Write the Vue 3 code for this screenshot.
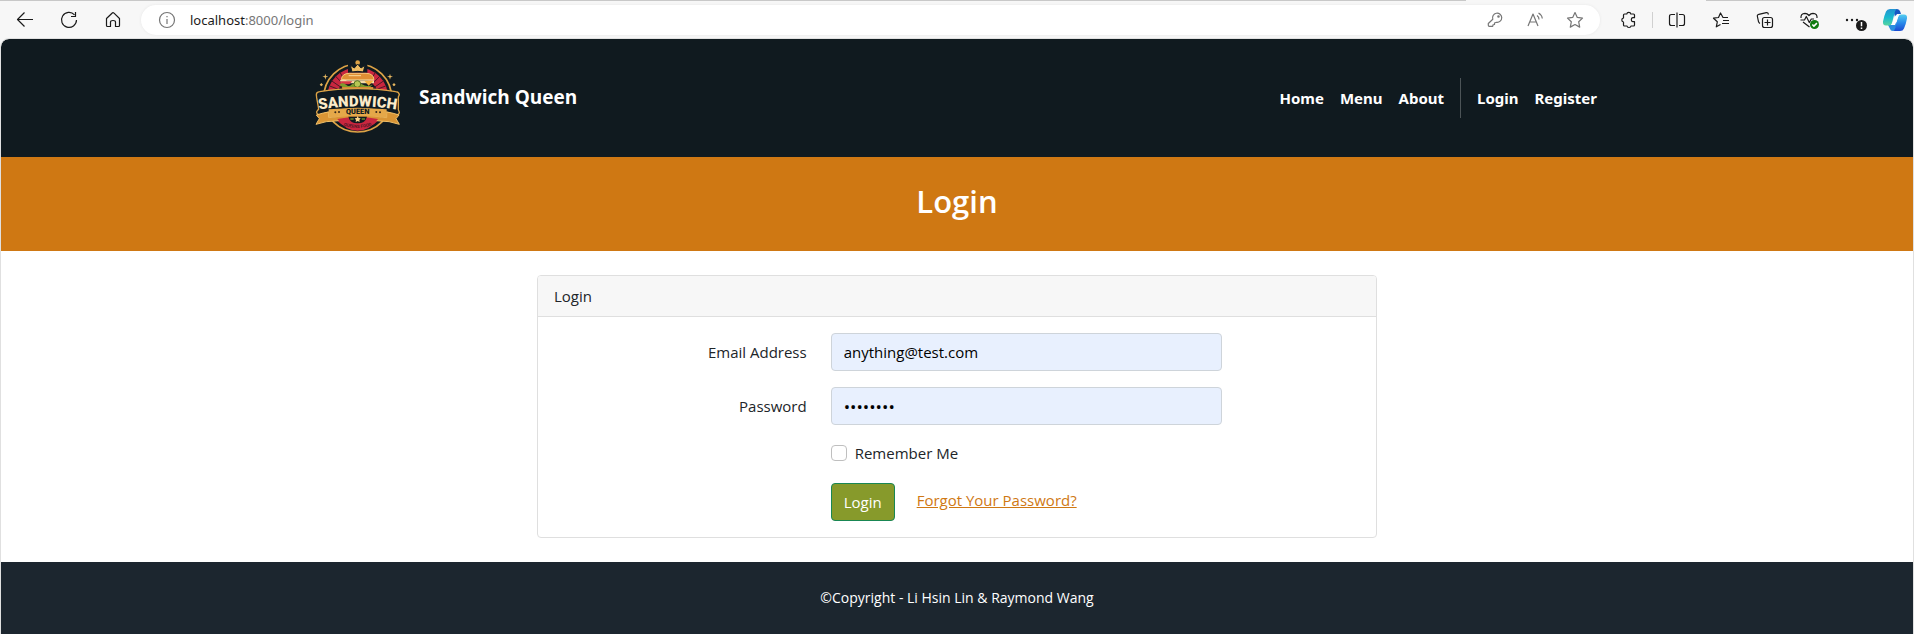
<script setup>
import { ref } from 'vue'

const email = ref('anything@test.com')
const password = ref('sandwich')
const remember = ref(false)

const mainLinks = ['Home', 'Menu', 'About']
const userLinks = ['Login', 'Register']
</script>

<template>
  <div class="window">
    <div class="tab-edge"><span class="edge"></span><span class="edge edge-end"></span></div>
    <div class="toolbar">
      <button class="tool" type="button" aria-label="Back">
        <svg viewBox="0 0 24 24"><path d="M4.5 11.5H20M11.5 4.5l-7 7 7 7" /></svg>
      </button>
      <button class="tool" type="button" aria-label="Refresh">
        <svg viewBox="0 0 24 24"><path d="M19.5 12A7.5 7.5 0 1 1 17.5 6.800M18.500 4v4.500H14" /></svg>
      </button>
      <button class="tool" type="button" aria-label="Home page">
        <svg viewBox="0 0 24 24"><path d="M5.500 10.500L11 5.200q1-1 2 0l5.500 5.300V17.500q0 1-1 1h-3V14q0-1.500-2.500-1.500T9.500 14v4.500h-3q-1 0-1-1z" /></svg>
      </button>

      <div class="address">
        <svg class="grey" viewBox="0 0 24 24"><circle cx="12" cy="12" r="7.500" /><path d="M12 11v5M12 8v1.200" /></svg>
        <span class="url"><span class="host">localhost</span>:8000/login</span>
        <button class="tool small" type="button" aria-label="Saved passwords">
          <svg class="grey" viewBox="0 0 24 24"><path d="M9.800 11.300A4.600 4.600 0 1 1 13.500 14.300L11.500 15v1.500l-1.500.3-.3 1.500H6.300q-1 0-1-1V15.500z" /><circle cx="15.500" cy="8.500" r=".7" /></svg>
        </button>
        <button class="tool small" type="button" aria-label="Read aloud">
          <svg class="grey" viewBox="0 0 24 24"><path d="M5 18L10 6l5 12M6.500 14h7M14 7.500a4.500 4.500 0 0 1 2 4M15.500 5a7.500 7.500 0 0 1 3.800 5.500" /></svg>
        </button>
        <button class="tool small" type="button" aria-label="Add to favorites">
          <svg class="grey" viewBox="0 0 24 24"><path d="M12 4.500l2.300 4.900 5.200.7-3.800 3.700 1 5.300L12 16.500 7.300 19.100l1-5.300-3.800-3.700 5.200-.7z" /></svg>
        </button>
      </div>

      <button class="tool" type="button" aria-label="Extensions">
        <svg viewBox="0 0 24 24"><path d="M7.500 6h2.300q.2-1.700 2-1.700t2 1.700h2.700q1 0 1 1v2.700h-1.700q-1.500.3-1.500 2t1.500 2h1.700v3.300q0 1-1 1H14q-.2 1.500-2 1.500t-2-1.500H7.500q-1 0-1-1V14q-1.700-.2-1.700-2t1.700-2V7q0-1 1-1z" /></svg>
      </button>
      <span class="tool-divider"></span>
      <button class="tool" type="button" aria-label="Split screen">
        <svg viewBox="0 0 24 24"><path d="M10 6.500H6.500q-2 0-2 2v7q0 2 2 2H10M14 6.500h3.500q2 0 2 2v7q0 2-2 2H14M12 4.500v15" /></svg>
      </button>
      <button class="tool" type="button" aria-label="Favorites">
        <svg viewBox="0 0 24 24"><path d="M19 9.500h-5L11.500 5 9.500 9.500l-5 .7 3.800 3.600-1 5 4.200-2.300M14 12.500h6M13 15.500h7" /></svg>
      </button>
      <button class="tool" type="button" aria-label="Collections">
        <svg viewBox="0 0 24 24"><path d="M7 15.500q-1.200-.5-1.500-1.800L4.400 8.500Q4 6.700 5.800 6.300l7.500-1.700q1.700-.3 2.200 1.900" /><rect x="9.500" y="9.500" width="10" height="10" rx="2" /><path d="M14.500 11.500v6M11.500 14.500h6" /></svg>
      </button>
      <button class="tool" type="button" aria-label="Browser essentials">
        <svg viewBox="0 0 24 24"><path d="M4 10q-.5-4.500 4-4.700 2.200 0 4 2.200 1.800-2.200 4-2.200 4.500.2 4 4.700M3.500 12h4l1.800-3.500 3 6 2-3.500H17M6 14l6.500 5" /><circle class="ok" cx="17.500" cy="16.500" r="4.500" /><path class="mark" d="M15.300 16.500l1.600 1.600 3-3" /></svg>
      </button>
      <button class="tool" type="button" aria-label="Settings and more">
        <svg viewBox="0 0 24 24"><g class="dots"><circle cx="6" cy="12" r="1.200" /><circle cx="11" cy="12" r="1.200" /><circle cx="16" cy="12" r="1.200" /><circle cx="20.500" cy="17.500" r="5.500" /></g><path class="mark" d="M20.500 14v4.300M20.500 19.600v1.400" /></svg>
      </button>
      <button class="tool copilot" type="button" aria-label="Copilot">
        <svg viewBox="0 0 24 24">
          <defs>
            <linearGradient id="cpA" x1="0" y1="0" x2="0" y2="1"><stop offset="0" stop-color="#2392d2" /><stop offset=".5" stop-color="#18b8cf" /><stop offset="1" stop-color="#57d5a0" /></linearGradient>
            <linearGradient id="cpB" x1="0" y1="0" x2="0" y2="1"><stop offset="0" stop-color="#54cef0" /><stop offset=".5" stop-color="#298bea" /><stop offset="1" stop-color="#1b4ad2" /></linearGradient>
          </defs>
          <path fill="#1757c4" d="M10 1h4q2.500 0 3.200 2.500L18 6h-4l-2 3z" />
          <path fill="#2a8fe0" d="M5 17h5l4-3-1.500 7q-.7 2-2.500 2-2.500 0-3.200-2.500z" />
          <path fill="url(#cpA)" d="M7 1h7q-1.500.5-2 2.500L9 15q-.8 2.500-3 2.500H3Q-.5 17.500 0 13.500 1 8 3 3.500 4 1 7 1z" />
          <path fill="url(#cpB)" d="M17 23h-7q1.500-.5 2-2.500L15 9q.8-2.500 3-2.500h3q3.500 0 3 4-1 5.500-3 10-1 2.500-4 2.500z" />
          <path fill="#fff" d="M12.500 7.500h3.200L12 17H8.500z" />
        </svg>
      </button>
    </div>

    <div class="page">
      <header class="header">
        <nav class="container navbar" aria-label="Main">
          <a class="brand" href="#home">
            <svg class="logo" viewBox="27 -6 300 300" role="img" aria-label="Sandwich Queen logo">
              <defs>
                <path id="nameArc" d="M40 182Q173 156 306 182" />
                <path id="queenArc" d="M100 194Q173 190 246 194" />
                <path id="mottoArc" d="M119 221Q173 247 227 221" />
              </defs>
              <circle cx="173" cy="144" r="102" fill="#101a20" stroke="#dda346" stroke-width="5" />
              <circle cx="173" cy="144" r="92" fill="#c9263f" />
              <circle cx="173" cy="148" r="65" fill="#101a20" />
              <path d="M94 92l32 22M106 78l25 26M120 67l16 28M252 92l-32 22M240 78l-25 26M226 67l-16 28M89 108l32 12M257 108l-32 12" stroke="#4c1925" stroke-width="3" />
              <path d="M144 36h58v32h-58z" fill="#101a20" />
              <circle cx="173" cy="38" r="7" fill="#dda346" />
              <path d="M156 66l-5-20 12 8 10-12 10 12 12-8-5 20q-17-4-34 0z" fill="#efbd63" stroke="#101a20" stroke-width="3" />
              <path d="M124 89Q126 70 148 70h50q22 0 24 19z" fill="#df8f35" stroke="#f4c779" stroke-width="3" />
              <path d="M146 77h37" stroke="#f8d99a" stroke-width="3" />
              <path d="M120 91q10-5 20 0h82v9h-98z" fill="#f3d9a6" />
              <path d="M122 94h35l-9 9h-23z" fill="#d83746" />
              <path d="M118 104q10-8 20 0t18-1q15-10 30 0t32 1l-8 8h-82z" fill="#7c9c2d" />
              <circle cx="172" cy="102" r="10" fill="#b6c654" stroke="#55731f" stroke-width="3" />
              <path d="M193 92h27l-14 15z" fill="#f2af3d" />
              <path d="M126 111h94q0 13-14 13h-66q-14 0-14-13z" fill="#d88b36" />
              <path d="M76 71l2 7 7 2-7 2-2 7-2-7-7-2 7-2zM270 71l2 7 7 2-7 2-2 7-2-7-7-2 7-2zM64 99l5 5-5 5-5-5zM282 99l5 5-5 5-5-5z" fill="#e6b760" />
              <path d="M49 134q0-8 10-9 52-9 114-9t114 9q10 1 11 9l-3 7v38l3 8q-1 8-12 8-51-20-113-20T60 195q-11-2-10-10l6-8-6-34z" fill="#101a20" stroke="#dda346" stroke-width="4" />
              <text text-anchor="middle" font-size="45" font-weight="900" fill="#fcebc8" class="logo-text"><textPath href="#nameArc" startOffset="50%">SANDWICH</textPath></text>
              <path d="M49 195q17-6 37-9v17q87-15 174 0v-17q20 3 37 9l-9 11 10 17q-32-11-59-10-66-12-132 0-27-1-59 10l10-17z" fill="#d99535" stroke="#f0bf68" stroke-width="3" />
              <path d="M86 178q87-6 174 0v25q-87-12-174 0z" fill="#e5a849" />
              <g fill="#3a2819"><circle cx="106" cy="187" r="3" /><circle cx="117" cy="186" r="3" /><circle cx="229" cy="186" r="3" /><circle cx="240" cy="187" r="3" /></g>
              <text text-anchor="middle" font-size="22" font-weight="900" fill="#101a20" class="logo-text"><textPath href="#queenArc" startOffset="50%">QUEEN</textPath></text>
              <path d="M112 207q61-12 122 0-24 35-61 35t-61-35z" fill="#c9263f" />
              <path d="M145 200h56q-5 20-28 20t-28-20z" fill="#101a20" />
              <path d="M173 198l3 6 6 1-4 5 1 6-6-3-6 3 1-6-4-5 6-1z" fill="#fbd48a" />
              <path d="M151 207h10M185 207h10" stroke="#6d872c" stroke-width="4" />
              <text text-anchor="middle" font-size="13" font-weight="700" fill="#4b1825" class="logo-text"><textPath href="#mottoArc" startOffset="50%">QUEENS FOOD</textPath></text>
            </svg>
            <span class="brand-name">Sandwich Queen</span>
          </a>
          <ul class="links">
            <li v-for="item in mainLinks" :key="item"><a :href="'#' + item.toLowerCase()">{{ item }}</a></li>
            <li class="rule" aria-hidden="true"></li>
            <li v-for="item in userLinks" :key="item"><a :href="'#' + item.toLowerCase()">{{ item }}</a></li>
          </ul>
        </nav>
      </header>

      <div class="banner"><h1>Login</h1></div>

      <main class="container main">
        <section class="card">
          <div class="card-header">Login</div>
          <form class="card-body" @submit.prevent>
            <div class="row">
              <label class="label" for="email">Email Address</label>
              <div class="field"><input id="email" v-model="email" class="control" type="email" autocomplete="email" /></div>
            </div>
            <div class="row">
              <label class="label" for="password">Password</label>
              <div class="field"><input id="password" v-model="password" class="control secret" type="password" autocomplete="current-password" /></div>
            </div>
            <div class="row">
              <div class="field check offset">
                <input id="remember" v-model="remember" type="checkbox" />
                <label for="remember">Remember Me</label>
              </div>
            </div>
            <div class="row">
              <div class="field actions offset">
                <button class="submit" type="submit">Login</button>
                <a class="forgot" href="#reset">Forgot Your Password?</a>
              </div>
            </div>
          </form>
        </section>
      </main>

      <footer class="footer">©Copyright - Li Hsin Lin &amp; Raymond Wang</footer>
    </div>
  </div>
</template>

<style>
body {
  background: #fff;
}
</style>

<style scoped>
* {
  box-sizing: border-box;
}
.window {
  background: #f7f7f7;
  color: #212529;
  font-family: "Open Sans", "Noto Sans", sans-serif;
  font-size: 15px;
  line-height: 24px;
}
.tab-edge {
  display: flex;
  justify-content: space-between;
  gap: 240px;
  height: 1px;
}
.edge {
  flex: 1;
  background: #c8c8c8;
}
.edge-end {
  flex: 0 0 208px;
}
.toolbar {
  display: flex;
  align-items: center;
  height: 38px;
  padding-left: 3px;
}
.tool {
  display: flex;
  flex: none;
  align-items: center;
  justify-content: center;
  width: 44px;
  height: 30px;
  padding: 0;
  border: 0;
  background: none;
}
.tool.small {
  width: 40px;
}
.tool.copilot {
  width: 39px;
}
.toolbar svg {
  flex: none;
  width: 24px;
  height: 24px;
  overflow: visible;
  fill: none;
  stroke: #1b1b1b;
  stroke-width: 1.2;
  stroke-linejoin: round;
}
.toolbar svg.grey {
  stroke: #767676;
}
.toolbar .copilot svg {
  stroke: none;
}
.toolbar .ok {
  fill: #107c10;
  stroke: none;
}
.toolbar .dots {
  fill: #1b1b1b;
  stroke: none;
}
.toolbar .mark {
  stroke: #fff;
  stroke-width: 1.5;
}
.address {
  display: flex;
  flex: 1;
  align-items: center;
  height: 30px;
  margin: 0 7px 0 6px;
  padding: 0 5px 0 14px;
  border-radius: 15px;
  background: #fff;
  box-shadow: 0 0 3px #e6e6e6;
}
.url {
  flex: 1;
  padding-left: 11px;
  color: #767676;
  font-family: "Noto Sans", sans-serif;
  font-size: 13px;
}
.host {
  color: #1b1b1b;
}
.tool-divider {
  width: 1px;
  height: 16px;
  margin: 0 2px 0 1px;
  background: #d0d0d0;
}
.page {
  overflow: hidden;
  margin: 0 1px;
  border-radius: 8px 8px 0 0;
  background: #fff;
  outline: 1px solid #e0e0e0;
}
.container {
  width: 100%;
  max-width: 1320px;
  margin: 0 auto;
  padding: 0 12px;
}
.header {
  background: #101a1f;
}
.navbar {
  display: flex;
  align-items: center;
  justify-content: space-between;
  padding-top: 9px;
  padding-bottom: 9px;
}
.brand {
  display: flex;
  align-items: center;
  gap: 10px;
  color: #fff;
  text-decoration: none;
}
.logo {
  width: 100px;
  height: 100px;
}
.logo-text {
  font-family: "Roboto", "Liberation Sans", sans-serif;
}
.brand-name {
  padding-bottom: 2px;
  font-size: 19px;
  font-weight: 700;
}
.links {
  display: flex;
  align-items: center;
  margin: 0;
  padding: 0;
  list-style: none;
}
.links a {
  display: block;
  padding: 8px;
  color: #fff;
  font-family: "Noto Sans", sans-serif;
  font-weight: 700;
  text-decoration: none;
}
.rule {
  width: 1px;
  height: 40px;
  margin: 0 8px;
  background: #4c5457;
}
.banner {
  padding: 25px 0 31px;
  background: #cf7813;
  color: #fff;
  text-align: center;
}
.banner h1 {
  margin: 0;
  font-size: 31px;
  font-weight: 600;
  line-height: 38px;
}
.main {
  padding-top: 24px;
  padding-bottom: 24px;
}
.card {
  width: calc(66.666% - 24px);
  margin: 0 auto;
  border: 1px solid #dfdfdf;
  border-radius: 4px;
}
.card-header {
  padding: 8px 16px;
  border-bottom: 1px solid #dfdfdf;
  border-radius: 3px 3px 0 0;
  background: #f7f7f7;
}
.card-body {
  display: flex;
  flex-direction: column;
  gap: 16px;
  padding: 16px;
}
.row {
  display: flex;
  margin: 0 -12px;
}
.label {
  width: 33.333%;
  padding: 7px 12px;
  text-align: right;
}
.field {
  width: 50%;
  padding: 0 12px;
}
.offset {
  margin-left: 33.333%;
}
.control {
  display: block;
  width: 100%;
  height: 38px;
  padding: 6px 12px;
  border: 1px solid #ced4da;
  border-radius: 4px;
  background: #e8f0fe;
  color: #000;
  font: inherit;
}
.secret {
  font-size: 17px;
}
.check {
  display: flex;
  align-items: center;
  gap: 8px;
  height: 26px;
  padding-bottom: 2px;
}
.check input {
  width: 16px;
  height: 16px;
  margin: 0;
  border: 1px solid #bfbfbf;
  border-radius: 4px;
  background: #fff;
  appearance: none;
}
.check input:checked {
  background: #879a2b;
}
.actions {
  display: flex;
  align-items: center;
  gap: 22px;
}
.submit {
  height: 38px;
  padding: 0 12px;
  border: 1px solid #198754;
  border-radius: 4px;
  background: #879a2b;
  color: #fff;
  font: inherit;
}
.forgot {
  padding-bottom: 4px;
  color: #cf7813;
}
.footer {
  padding: 24px 0;
  background: #1c262f;
  color: #fff;
  font-size: 14px;
  text-align: center;
}
</style>
